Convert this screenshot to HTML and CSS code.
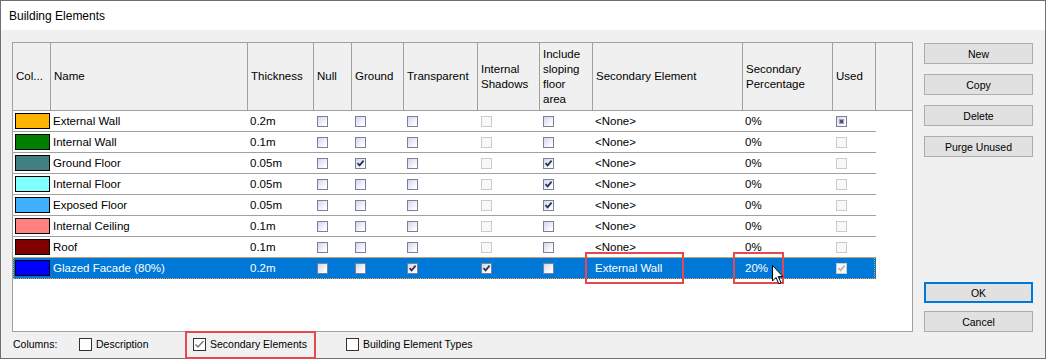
FILE: index.html
```html
<!DOCTYPE html>
<html lang="en">
<head>
    <meta charset="UTF-8">
    <meta name="viewport" content="width=device-width, initial-scale=1.0">
    <title>Building Elements</title>
    <link rel="stylesheet" href="styles.css">
</head>
<body>
    <div class="window">
        <div class="titlebar">Building Elements</div>

        <div class="main">
            <div class="grid" id="grid">
                <div class="row head">
                    <div class="hc">Col...</div>
                    <div class="hc">Name</div>
                    <div class="hc">Thickness</div>
                    <div class="hc">Null</div>
                    <div class="hc">Ground</div>
                    <div class="hc">Transparent</div>
                    <div class="hc">Internal<br>Shadows</div>
                    <div class="hc">Include<br>sloping<br>floor<br>area</div>
                    <div class="hc">Secondary Element</div>
                    <div class="hc">Secondary<br>Percentage</div>
                    <div class="hc">Used</div>
                    <div class="hc fill"></div>
                </div>
            </div>

            <div class="side">
                <button class="btn">New</button>
                <button class="btn">Copy</button>
                <button class="btn">Delete</button>
                <button class="btn">Purge Unused</button>
                <button class="btn ok">OK</button>
                <button class="btn cancel">Cancel</button>
            </div>
        </div>

        <div class="bottom">
            <span class="bottom-label">Columns:</span>
            <label class="opt opt-desc"><span class="cb13"></span>Description</label>
            <label class="opt opt-sec"><span class="cb13 on"><svg viewBox="0 0 11 11"><path d="M1.5 5.5 L4 8 L9.5 2"/></svg></span>Secondary Elements</label>
            <label class="opt"><span class="cb13"></span>Building Element Types</label>
        </div>

        <!-- annotation boxes and mouse pointer -->
        <div class="mark mark-sec"></div>
        <div class="mark mark-pct"></div>
        <div class="mark mark-opt"></div>
        <svg class="cursor" width="13" height="20" viewBox="0 0 13 20">
            <path d="M0.5 0.5 L0.5 16 L4 12.5 L6.8 18.8 L9 17.8 L6.3 11.6 L11 11.6 Z" fill="#fff" stroke="#000" stroke-width="1"/>
        </svg>
    </div>

    <script>
        const elements = [
            { color: "#ffb400", name: "External Wall", thick: "0.2m", flags: [0, 0, 0, "d", 0], sec: "&lt;None&gt;", pct: "0%", used: "i" },
            { color: "#008000", name: "Internal Wall", thick: "0.1m", flags: [0, 0, 0, "d", 0], sec: "&lt;None&gt;", pct: "0%", used: "d" },
            { color: "#408080", name: "Ground Floor", thick: "0.05m", flags: [0, 1, 0, "d", 1], sec: "&lt;None&gt;", pct: "0%", used: "d" },
            { color: "#80ffff", name: "Internal Floor", thick: "0.05m", flags: [0, 0, 0, "d", 1], sec: "&lt;None&gt;", pct: "0%", used: "d" },
            { color: "#40b0ff", name: "Exposed Floor", thick: "0.05m", flags: [0, 0, 0, "d", 1], sec: "&lt;None&gt;", pct: "0%", used: "d" },
            { color: "#ff8080", name: "Internal Ceiling", thick: "0.1m", flags: [0, 0, 0, "d", 0], sec: "&lt;None&gt;", pct: "0%", used: "d" },
            { color: "#800000", name: "Roof", thick: "0.1m", flags: [0, 0, 0, "d", 0], sec: "&lt;None&gt;", pct: "0%", used: "d" },
            { color: "#0000ff", name: "Glazed Facade (80%)", thick: "0.2m", flags: [0, 0, 1, 1, 0], sec: "External Wall", pct: "20%", used: "dc", selected: true }
        ];

        const tick = '<svg viewBox="0 0 9 9"><path d="M1.5 4.2 L3.6 6.4 L7.6 1.6"/></svg>';

        function checkbox(state) {
            if (state === 1) return `<span class="cb">${tick}</span>`;
            if (state === "d") return `<span class="cb dis"></span>`;
            if (state === "dc") return `<span class="cb dis">${tick}</span>`;
            if (state === "i") return `<span class="cb ind"></span>`;
            return `<span class="cb"></span>`;
        }

        function renderGrid() {
            const grid = document.getElementById("grid");
            elements.forEach(el => {
                let row = document.createElement("div");
                row.className = el.selected ? "row sel" : "row";
                let boxes = el.flags.map(f => `<div class="c box">${checkbox(f)}</div>`).join("");
                row.innerHTML = `
                    <div class="c"><span class="swatch" style="background:${el.color}"></span></div>
                    <div class="c">${el.name}</div>
                    <div class="c">${el.thick}</div>
                    ${boxes}
                    <div class="c">${el.sec}</div>
                    <div class="c">${el.pct}</div>
                    <div class="c box">${checkbox(el.used)}</div>
                    <div class="c fill"></div>
                `;
                grid.appendChild(row);
            });
        }

        renderGrid();
    </script>
</body>
</html>
```

FILE: styles.css
```css
body {
    margin: 0;
    font-family: "Liberation Sans", Arial, sans-serif;
    font-size: 11.5px;
    color: #000;
    background: #2b2f36;
}
.window {
    position: relative;
    width: 1046px;
    height: 359px;
    box-sizing: border-box;
    border: 1px solid #707070;
    background: #f0f0f0;
    display: flex;
    flex-direction: column;
}
.titlebar {
    height: 29px;
    flex-shrink: 0;
    background: #fff;
    padding-left: 8px;
    display: flex;
    align-items: center;
    font-size: 12px;
}
.main {
    display: flex;
    padding: 12px 0 0 11px;
}
.grid {
    width: 901px;
    height: 290px;
    box-sizing: border-box;
    border: 1px solid #a0a0a0;
    background: #fff;
    overflow: hidden;
}
.row {
    display: grid;
    grid-template-columns: 38px 197px 66px 38px 52px 74px 62px 53px 150px 90px 43px 36px;
    height: 21px;
}
.row.head {
    height: 68px;
    background: #f0f0f0;
}
.hc {
    box-sizing: border-box;
    border-right: 1px solid #a0a0a0;
    border-bottom: 1px solid #a0a0a0;
    padding-left: 3px;
    display: flex;
    align-items: center;
    line-height: 15px;
    white-space: nowrap;
}
.hc.fill {
    border-right: none;
}
.c {
    box-sizing: border-box;
    border-bottom: 1px solid #a0a0a0;
    padding: 0 0 1px 2px;
    display: flex;
    align-items: center;
    white-space: nowrap;
}
.c.box {
    padding: 0 0 0 3px;
}
.c.fill {
    border-bottom: none;
}
.swatch {
    width: 35px;
    height: 16px;
    box-sizing: border-box;
    border: 1px solid #000;
}
.row.sel {
    position: relative;
}
.row.sel .c:not(.fill) {
    background: #0078d7;
    color: #fff;
    border-bottom-color: #0078d7;
}
.row.sel::after {
    content: "";
    position: absolute;
    left: 0;
    top: -1px;
    width: 862px;
    height: 22px;
    box-sizing: border-box;
    border: 1px dotted #f0a040;
    pointer-events: none;
}

/* grid checkboxes */
.cb {
    width: 11px;
    height: 11px;
    box-sizing: border-box;
    border: 1px solid #79819a;
    background: linear-gradient(135deg, #d3d6ee 0%, #ffffff 85%);
    display: flex;
    align-items: center;
    justify-content: center;
}
.cb svg {
    width: 9px;
    height: 9px;
}
.cb svg path {
    fill: none;
    stroke: #25344e;
    stroke-width: 1.7;
}
.cb.dis {
    border-color: #cbcbcb;
    background: #f8f8f8;
}
.cb.dis svg path {
    stroke: #b8b8b8;
}
.cb.ind::before {
    content: "";
    width: 5px;
    height: 5px;
    background: #4b587a;
    border: 1px solid #9aa3c0;
    box-sizing: border-box;
}

/* side buttons */
.side {
    margin-left: 11px;
    width: 109px;
    display: flex;
    flex-direction: column;
    gap: 10px;
    padding-top: 1px;
}
.btn {
    height: 21px;
    box-sizing: border-box;
    border: 1px solid #adadad;
    background: #e1e1e1;
    font-family: "Liberation Sans", Arial, sans-serif;
    font-size: 10.5px;
    color: #000;
    padding: 0;
}
.btn.ok {
    margin-top: auto;
    border: 2px solid #0078d7;
}
.btn.cancel {
    margin-top: -2px;
}

/* column options */
.bottom {
    flex: 1;
    display: flex;
    align-items: center;
    padding: 0 0 2px 12px;
    font-size: 10.5px;
}
.bottom-label {
    width: 66px;
}
.opt {
    display: flex;
    align-items: center;
    gap: 4px;
}
.opt-desc {
    width: 114px;
}
.opt-sec {
    width: 153px;
}
.cb13 {
    width: 13px;
    height: 13px;
    box-sizing: border-box;
    border: 1px solid #333;
    background: #fff;
    display: flex;
}
.cb13 svg {
    width: 11px;
    height: 11px;
}
.cb13 svg path {
    fill: none;
    stroke: #7a7a7a;
    stroke-width: 1.5;
}

/* red annotation boxes */
.mark {
    position: absolute;
    box-sizing: border-box;
    border: 2px solid #e8474c;
}
.mark-sec {
    left: 584px;
    top: 251px;
    width: 99px;
    height: 32px;
}
.mark-pct {
    left: 732px;
    top: 251px;
    width: 51px;
    height: 32px;
}
.mark-opt {
    left: 184px;
    top: 330px;
    width: 131px;
    height: 28px;
}
.cursor {
    position: absolute;
    left: 771px;
    top: 264px;
}
```
